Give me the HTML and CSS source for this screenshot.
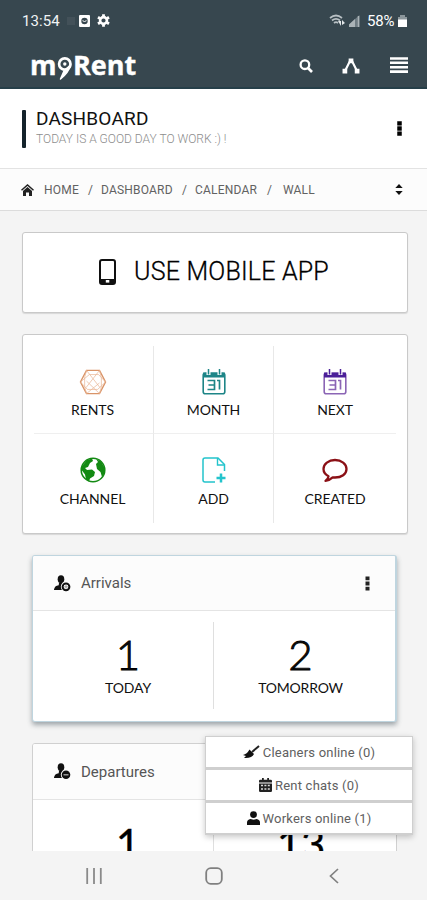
FILE: index.html
```html
<!DOCTYPE html>
<html lang="en">
<head>
<meta charset="utf-8">
<title>myRent</title>
<link rel="stylesheet" href="styles.css">
</head>
<body>
<div class="phone">
  <header class="top">
    <div class="status">
      <span class="clock">13:54</span>
      <i class="faint"></i>
      <svg class="st-app" width="11" height="12" viewBox="0 0 11 12"><rect width="11" height="12" rx="1" fill="#fff"/><circle cx="5.5" cy="6" r="3.2" fill="#37474f"/><path d="M3.5 5.7q2 1.600 4 0" stroke="#fff" fill="none"/></svg>
      <svg class="st-gear" width="13" height="13" viewBox="-6.500 -6.500 13 13"><circle r="3.400" fill="none" stroke="#fff" stroke-width="2.600"/><path d="M0-6.300V-4M0 4v2.300M-5.500-3.200l2 1.200M3.500 2l2 1.200M-5.500 3.200l2-1.200M3.500-2l2-1.200" stroke="#fff" stroke-width="2.800"/></svg>
      <span class="grow"></span>
      <svg class="st-wifi" width="17" height="13" viewBox="0 0 17 13"><g fill="none" stroke="#b8c0c4" stroke-width="1.700"><path d="M1 4q6-5 12 0M3 6.500q4-3.400 8 0M5 9q2-1.800 4 0"/></g><path d="M9 7l3 5V7zM13 6l3 3-3 2z" fill="#e4e8ea"/></svg>
      <svg class="st-sig" width="11" height="12" viewBox="0 0 11 12"><path d="M0 12v-2.500L10.500 0v12z" fill="#6f7c83"/><path d="M0 12V9.500L6 4v8z" fill="#aab3b7"/><path d="M9.500 1v11" stroke="#aab3b7" stroke-width="1.500"/></svg>
      <span class="pct">58%</span>
      <svg class="st-bat" width="9" height="12" viewBox="0 0 9 12"><path d="M0 2h2V0h5v2h2v3H0z" fill="#8b969b"/><path d="M0 4.500h9V12H0z" fill="#fff"/></svg>
    </div>
    <div class="brandbar">
      <div class="logo"><span class="logo-m">m</span><svg class="pin" width="16" height="30" viewBox="0 0 16 30"><circle cx="7.800" cy="12" r="5.700" fill="none" stroke="#fff" stroke-width="2.700"/><path d="M13.600 13Q11.500 20.500 3.500 27L7.200 18.500z" fill="#fff" stroke="#fff" stroke-width="1.500" stroke-linejoin="round"/><circle cx="7.800" cy="12" r="1.700" fill="#fff"/></svg><span class="logo-r">Rent</span></div>
      <span class="grow"></span>
      <svg class="ic-search" width="14" height="14" viewBox="0 0 14 14" fill="none" stroke="#fff"><circle cx="5.900" cy="5.700" r="4.300" stroke-width="2.300"/><path d="M9 9l4 4" stroke-width="2.700"/></svg>
      <svg class="ic-fork" width="18" height="16" viewBox="0 0 19 17"><path d="M3 14L8 4h3l5 10" fill="none" stroke="#fff" stroke-width="2.300"/><path d="M7 .5h5v5H7zM.5 11.500h5v5h-5zM13.500 11.500h5v5h-5z" fill="#fff"/></svg>
      <svg class="ic-bars" width="18" height="17" viewBox="0 0 18 17"><path d="M0 1.500h18M0 5.800h18M0 10.200h18M0 14.600h18" stroke="#fff" stroke-width="2.600"/></svg>
    </div>
  </header>

  <section class="title">
    <i class="mark"></i>
    <div class="title-text">
      <h1>DASHBOARD</h1>
      <p>TODAY IS A GOOD DAY TO WORK :) !</p>
    </div>
    <span class="grow"></span>
    <svg class="dots-lg" width="5" height="15" viewBox="0 0 5 15"><path d="M.5.500h4v3.800h-4zM.5 5.600h4v3.800h-4zM.5 10.700h4v3.800h-4z" fill="#000" stroke="#000" stroke-width=".5" stroke-linejoin="round"/></svg>
  </section>

  <nav class="crumbs">
    <svg class="home" width="13" height="12" viewBox="0 0 13 12"><path d="M.5 6.200l6-5.200 6 5.200" fill="none" stroke="#222" stroke-width="1.500"/><path d="M2 7l4.500-4L11 7v5H8V8.500H5V12H2z" fill="#222"/></svg>
    <span class="c1">HOME</span><span class="s1">/</span><span class="c2">DASHBOARD</span><span class="s2">/</span><span class="c3">CALENDAR</span><span class="s3">/</span><span class="c4">WALL</span>
    <span class="grow"></span>
    <svg class="sort" width="8" height="11" viewBox="0 0 8 11"><path d="M4 0l3.700 4H.3zM4 11l3.700-4H.3z" fill="#111"/></svg>
  </nav>

  <main class="content">
    <div class="card mobile">
      <svg width="17" height="26" viewBox="0 0 17 26"><rect x="1" y="1" width="15" height="24" rx="2" fill="#fff" stroke="#111" stroke-width="2"/><path d="M1 20h15v4.500H1z" fill="#111"/><path d="M6.800 21h3.500v2.600H6.800z" fill="#fff"/></svg>
      <span>USE MOBILE APP</span>
    </div>

    <div class="card tiles">
      <a class="tile">
        <svg width="30" height="28" viewBox="0 0 30 28" fill="none" stroke="#d99468"><path d="M8 1.500h14L28.500 14 22 26.500H8L1.500 14z" stroke-width="1.500"/><path d="M8 1.500L22.500 20M22 1.500L7.500 20M1.500 14L11 6h10l7.500 8L20 22H9zM8 1.500L6 9v10l2 7.500L22 15M22 1.500l2 8v10l-2 7L8 13" stroke="#e9b797" stroke-width=".8"/></svg>
        <span class="l-rents">RENTS</span>
      </a>
      <a class="tile teal">
        <svg width="24" height="26" viewBox="0 0 24 26"><rect x="1.200" y="4.200" width="21.600" height="20.600" rx="2" fill="none" stroke="currentColor" stroke-width="1.600"/><path d="M1 3.500h22v5H1z" fill="currentColor"/><path d="M6.500 0v6M17.500 0v6" stroke="#fff" stroke-width="4"/><path d="M6.500 0v5.500M17.500 0v5.500" stroke="currentColor" stroke-width="1.500"/><path d="M5.500 11.500h7v9h-7M6.500 16h6M15 11.500h2.500v9" fill="none" stroke="currentColor" stroke-width="1.700"/></svg>
        <span class="l-month">MONTH</span>
      </a>
      <a class="tile purple">
        <svg width="24" height="26" viewBox="0 0 24 26"><rect x="1.200" y="4.200" width="21.600" height="20.600" rx="2" fill="none" stroke="#8b65b5" stroke-width="1.600"/><path d="M1 3.500h22v5H1z" fill="currentColor"/><path d="M6.500 0v6M17.500 0v6" stroke="#fff" stroke-width="4"/><path d="M6.500 0v5.500M17.500 0v5.500" stroke="currentColor" stroke-width="1.500"/><path d="M5.500 11.500h7v9h-7M6.500 16h6M15 11.500h2.500v9" fill="none" stroke="#8b65b5" stroke-width="1.700"/></svg>
        <span class="l-next">NEXT</span>
      </a>
      <a class="tile">
        <svg width="26" height="26" viewBox="0 0 26 26"><circle cx="13" cy="13" r="11.800" fill="#fff" stroke="#138a13" stroke-width="1.500"/><path d="M2 9L7 3l5-1.500L13 4l-3 2-2 4-3 1 2 2 5-.5 3 2.500-1 4-4 2.500-1 3-3-2-1-5-3-4zM16 2l5 2.500 3.500 6L24 17l-2 3-1.500-5-3.500-3-1-5 2-2z" fill="#138a13"/></svg>
        <span class="l-channel">CHANNEL</span>
      </a>
      <a class="tile">
        <svg width="24" height="26" viewBox="0 0 24 26" fill="none" stroke="#23c4cc"><path d="M13 25H3q-2 0-2-2V3q0-2 2-2h13l6.500 6.500V14" stroke-width="1.500"/><path d="M15.500 1v7h7" stroke-width="1.400"/><path d="M19 16.500v9M14.500 21h9" stroke-width="2.500"/></svg>
        <span class="l-add">ADD</span>
      </a>
      <a class="tile">
        <svg width="26" height="26" viewBox="0 0 26 26"><path d="M6.500 19.200C3.200 17.500 1.500 14.800 1.500 12 1.500 6.800 6.600 3 13 3s11.500 3.800 11.500 9S19.400 20.500 13 20.500q-1 0-2.300-.2-3.500 3.200-7.200 3.500 3-2.300 3-4.600z" fill="none" stroke="#8b1016" stroke-width="2.300" stroke-linejoin="round"/></svg>
        <span class="l-created">CREATED</span>
      </a>
    </div>

    <div class="stat active">
      <div class="stat-head">
        <svg width="17" height="17" viewBox="0 0 17 17"><ellipse cx="7" cy="4.200" rx="3.300" ry="4" fill="#111"/><path d="M0 14.500q.5-3.700 4.700-4.300L5 8h4v7H0z" fill="#111"/><circle cx="12" cy="11.800" r="5.200" fill="#fdfdfd"/><circle cx="12" cy="11.800" r="3.400" fill="none" stroke="#111" stroke-width="2"/><path d="M12 10v3.600M10.200 11.800h3.600" stroke="#888" stroke-width=".8"/></svg>
        <span class="arrivals">Arrivals</span>
        <span class="grow"></span>
        <svg width="5" height="15" viewBox="0 0 5 15"><path d="M.5.500h4v3.800h-4zM.5 5.600h4v3.800h-4zM.5 10.700h4v3.800h-4z" fill="#222"/></svg>
      </div>
      <div class="stat-body">
        <div class="num"><b>1</b><span class="l-today">TODAY</span></div>
        <div class="num"><b>2</b><span class="l-tom">TOMORROW</span></div>
      </div>
    </div>

    <div class="stat">
      <div class="stat-head">
        <svg width="17" height="17" viewBox="0 0 17 17"><ellipse cx="7" cy="4.200" rx="3.300" ry="4" fill="#111"/><path d="M0 14.500q.5-3.700 4.700-4.300L5 8h4v7H0z" fill="#111"/><circle cx="12" cy="11.800" r="5.200" fill="#fdfdfd"/><circle cx="12" cy="11.800" r="4.300" fill="#111"/><path d="M9.500 11.800h5" stroke="#bbb" stroke-width="1.200"/></svg>
        <span class="departures">Departures</span>
      </div>
      <div class="stat-body dark">
        <div class="num"><b>1</b></div>
        <div class="num"><b>13</b></div>
      </div>
    </div>
  </main>

  <footer class="sysnav">
    <svg width="16" height="16" viewBox="0 0 16 16"><path d="M1.200 0v16M8 0v16M14.800 0v16" stroke="#8a8a8a" stroke-width="1.800"/></svg>
    <svg class="nav-home" width="18" height="18" viewBox="0 0 18 18"><rect x="1.200" y="1.200" width="15.600" height="15.600" rx="4.500" fill="none" stroke="#808080" stroke-width="1.800"/></svg>
    <svg width="10" height="16" viewBox="0 0 10 16"><path d="M9 1L1.500 8 9 15" fill="none" stroke="#808080" stroke-width="1.700"/></svg>
  </footer>

  <aside class="chat">
    <div><svg width="17" height="14" viewBox="0 0 17 14"><path d="M16 1L9 7" stroke="#222" stroke-width="2"/><path d="M6.500 4.500l4.500 4.500Q9 13.500 1 13l2-2-3-1q4-1 6.500-5.500z" fill="#111"/></svg><span class="o1">Cleaners online (0)</span></div>
    <div><svg width="13" height="14" viewBox="0 0 13 14"><path d="M0 3q0-1.200 1.200-1.200H3V0h1.800v1.800h3.400V0H10v1.800h1.800Q13 1.800 13 3v9.800q0 1.200-1.200 1.200H1.200Q0 14 0 12.800z" fill="#222"/><path d="M0 5h13" stroke="#fff"/><path d="M2 7.500h9M2 11h9" stroke="#ddd" stroke-width="1.700" stroke-dasharray="2 1.400"/></svg><span class="o2">Rent chats (0)</span></div>
    <div><svg width="13" height="14" viewBox="0 0 13 14"><circle cx="6.500" cy="3.600" r="3.400" fill="#111"/><path d="M0 14v-2.500Q0 8.500 3.500 8l3 .8 3-.8q3.500.5 3.500 3.500V14z" fill="#111"/></svg><span class="o3">Workers online (1)</span></div>
  </aside>
</div>
</body>
</html>
```
FILE: styles.css
```css
* { box-sizing: border-box; }
body { margin: 0; background: #f4f4f4; font-family: Roboto, "Liberation Sans", sans-serif; }
svg { display: block; flex: none; }
.grow { flex: 1; }
.phone { position: relative; width: 427px; height: 900px; overflow: hidden; display: flex; flex-direction: column; }

.top { height: 89px; flex: none; background: #37474f; border-bottom: 2px solid #263f49; color: #fff; }
.status { height: 41px; display: flex; align-items: center; padding: 0 20px 0 22px; font-size: 15px; }
.clock { width: 39px; letter-spacing: 0.1px; white-space: nowrap; color: #f0f3f4; }
.faint { width: 8px; height: 8px; margin-left: 6px; background: #435159; }
.st-app { margin-left: 4px; }
.st-gear { margin-left: 7px; }
.st-wifi { margin-right: 3px; }
.st-sig { margin-right: 7px; }
.pct { width: 29px; letter-spacing: -0.2px; margin-right: 2px; white-space: nowrap; }
.brandbar { height: 46px; display: flex; align-items: center; padding: 3px 19px 0 30px; }
.logo { display: flex; align-items: center; font: 700 27px/30px "Open Sans", sans-serif; -webkit-text-stroke: 0.4px #fff; margin-top: -1px; }
.logo-m { width: 27px; }
.pin { margin: 3px 0 0 0; }
.logo-r { letter-spacing: 0; }
.ic-search { margin-right: 30px; position: relative; left: 1px; }
.ic-fork { margin-right: 30px; }

.title { height: 79px; flex: none; background: #fff; display: flex; align-items: center; padding: 0 25px 0 22px; }
.mark { width: 4px; height: 38px; background: #14232b; border-radius: 1px; }
.title-text { margin: -3px 0 0 10px; white-space: nowrap; }
h1 { margin: 0; font-weight: 400; font-size: 19px; line-height: 22px; letter-spacing: 0.2px; color: #111; }
.title-text p { margin: 2px 0 0; font-size: 12px; line-height: 15px; font-weight: 300; color: #8d8d8d; }

.crumbs { height: 43px; flex: none; background: #fcfcfc; border-top: 1px solid #e3e3e3; border-bottom: 1px solid #dcdcdc; display: flex; align-items: center; padding: 0 24px 0 21px; font-size: 12px; letter-spacing: 0.2px; color: #626262; white-space: nowrap; }
.c1 { margin-left: 10px; width: 35px; }
.s1 { margin-left: 9px; width: 4px; }
.c2 { margin-left: 9px; width: 73px; }
.s2 { margin-left: 8px; width: 4px; }
.c3 { margin-left: 9px; width: 63px; }
.s3 { margin-left: 9px; width: 4px; }
.c4 { margin-left: 12px; }

.content { height: 640px; flex: none; padding: 21px 19px 0 22px; overflow: hidden; }
.card { background: #fff; border: 1px solid #c9c9c9; border-radius: 3px; box-shadow: 0 1px 1px #d8d8d8; }
.mobile { height: 81px; display: flex; align-items: center; justify-content: center; gap: 18px; font-size: 25px; font-weight: 300; letter-spacing: 0.2px; color: #000; padding-bottom: 2px; padding-right: 2px; -webkit-text-stroke: 0.3px #000; }
.tiles { margin-top: 21px; height: 200px; padding: 11px 11px 10px; display: grid; grid-template-columns: 120px 120px 1fr; grid-template-rows: 88px 89px; }
.tile { display: flex; flex-direction: column; align-items: center; padding-top: 23px; border-right: 1px solid #e8e8e8; font: 400 14px/18px Lato, sans-serif; color: #111; }
.tile:nth-child(3n+1) { padding-right: 2px; }
.tile:nth-child(3n) { border-right: 0; }
.tile:nth-child(-n+3) { border-bottom: 1px solid #efefef; }
.tile svg { height: 26px; }
.tile span { margin-top: 7px; letter-spacing: -0.1px; }
.tile:nth-child(-n+3) span { margin-top: 6px; }
.teal svg { color: #1d8587; }
.purple svg { color: #4b1f99; }

.stat { margin: 21px 11px 0 10px; height: 167px; background: #fff; border: 1px solid #d0d0d0; border-radius: 3px; overflow: hidden; }
.stat.active { border-color: #bfd5df; border-width: 1px 2px 1px 1px; box-shadow: 0 3px 5px rgba(55, 71, 79, .45); }
.stat-head { height: 56px; background: #fcfcfc; border-bottom: 1px solid #e4e4e4; display: flex; align-items: center; padding: 0 25px 0 21px; font-size: 15px; color: #555; }
.active .stat-head { height: 55px; }
.stat-head span:not(.grow) { margin-left: 10px; }
.stat-body { height: 110px; display: grid; grid-template-columns: 181px 1fr; padding: 11px 0 12px; }
.num { display: flex; flex-direction: column; align-items: center; font-family: Lato, sans-serif; color: #111; }
.num:first-child { border-right: 1px solid #dfdfdf; padding-left: 10px; }
.num:last-child { padding-right: 8px; }
.num b { font-weight: 300; font-size: 42px; line-height: 50px; margin-top: 7px; -webkit-text-stroke: 0.900px #000; }
.num span { font-size: 14px; line-height: 18px; letter-spacing: -0.1px; }
.num .l-tom { letter-spacing: -0.2px; }
.dark b { font-weight: 400; margin-top: 8px; -webkit-text-stroke: 0.300px #000; color: #000; }

.sysnav { height: 49px; flex: none; background: #f4f4f4; display: flex; align-items: center; padding: 0 88px 0 86px; justify-content: space-between; }
.nav-home { margin-right: 4px; }

.chat { position: absolute; left: 205px; top: 736px; width: 208px; box-shadow: 0 2px 6px rgba(0, 0, 0, .22); }
.chat div { height: 33px; background: #fff; border: 1px solid #cfcfcf; border-bottom-width: 2px; display: flex; align-items: center; justify-content: center; gap: 3px; font-size: 13px; letter-spacing: 0.2px; color: #606060; white-space: nowrap; }
```
